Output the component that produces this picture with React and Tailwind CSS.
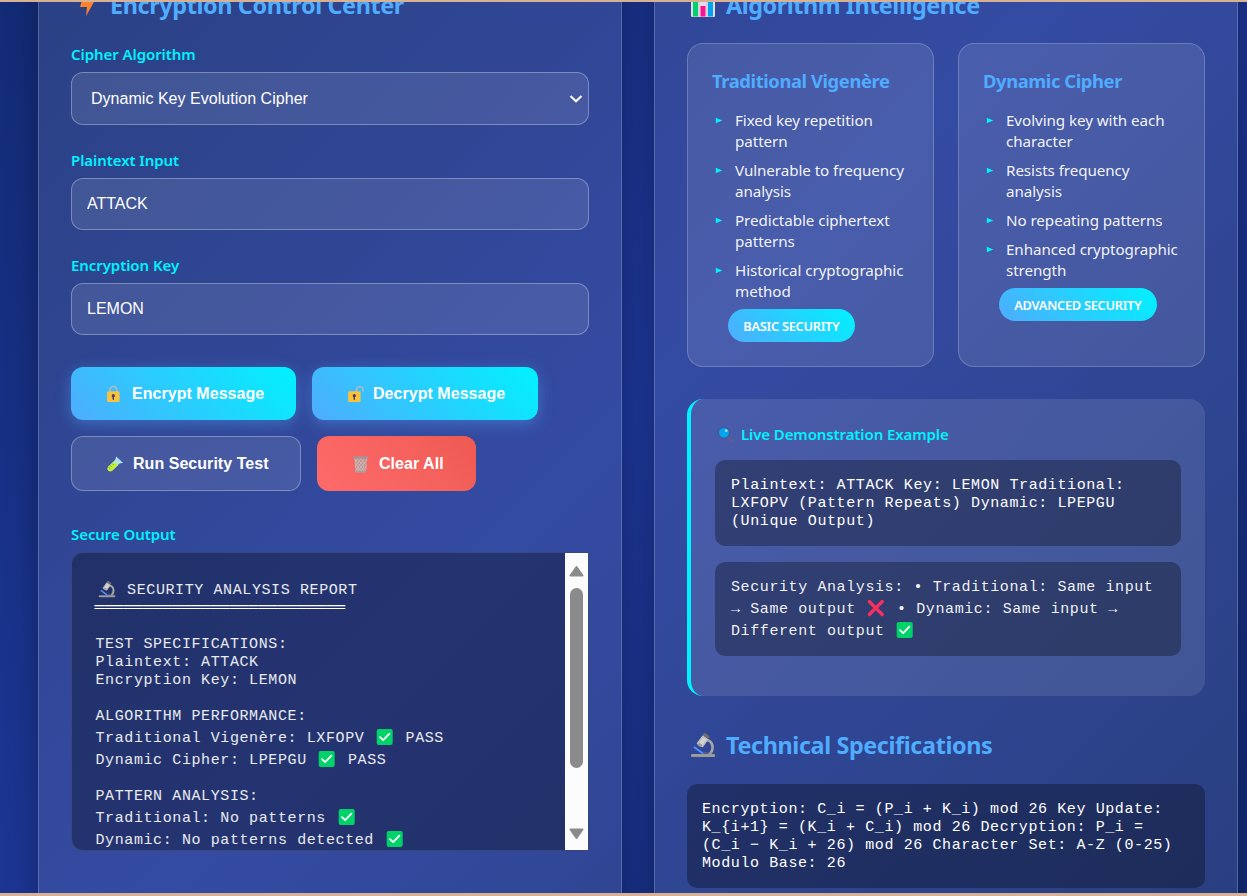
import React from "react";

const Bolt = () => (
  <svg viewBox="0 0 32 32" className="h-8 w-8">
    <path d="M13.5 3 H22 L19.5 13 H23 L15 27 L16 18 H9 Z" fill="#ff822d" />
  </svg>
);

const BarChart = () => (
  <svg viewBox="0 0 32 32" className="h-8 w-8">
    <rect x="4" y="4" width="24" height="24" rx="1.5" fill="#e6dcee" />
    <path d="M12 4v24M20 4v24" stroke="#cdc4d6" />
    <rect x="6" y="10" width="5" height="17.500" fill="#00d26a" />
    <rect x="13.5" y="17" width="5" height="10.500" fill="#f8158f" />
    <rect x="21" y="6" width="5" height="21.500" fill="#00a6ed" />
  </svg>
);

const Microscope = ({ className }) => (
  <svg viewBox="0 0 32 32" className={className}>
    <path d="M19 10.5 C26 12 28 20 22 26" fill="none" stroke="#a8a8a8" strokeWidth="2.6" />
    <path d="M13 27 H25 V23 H17 Z" fill="#7d7d7d" opacity=".35" />
    <rect x="4" y="25" width="24" height="3" rx="1.2" fill="#9b9b9b" />
    <path d="M7 18 L16 24.5" stroke="#5092ff" strokeWidth="2" />
    <path d="M16 7 L20.500 10.500 L15.500 17.500 L10.500 14.500 Z" fill="#d3d3d3" stroke="#bdbdbd" strokeLinejoin="round" strokeWidth="1.500" />
    <path d="M17.500 5.500 L21 8" stroke="#6f6f6f" strokeWidth="3" strokeLinecap="round" />
    <path d="M11.500 15 L14.500 17" stroke="#9b9b9b" strokeWidth="3" />
  </svg>
);

const Check = () => (
  <svg viewBox="0 0 22 22" className="mt-[2px] inline-block h-[22px] w-[22px] align-top">
    <rect x="2.700" y="1" width="16" height="16" rx="2" fill="#00d26a" />
    <path d="M6 9.200 L9.200 12.200 L15.400 5.600" fill="none" stroke="#fff" strokeWidth="1.800" strokeLinecap="round" strokeLinejoin="round" />
  </svg>
);

const Cross = () => (
  <svg viewBox="0 0 22 22" className="mt-[2px] inline-block h-[22px] w-[22px] align-top">
    <path d="M4.300 2.500 L17.300 15.500 M17.300 2.500 L4.300 15.500" stroke="#f92f60" strokeWidth="3.200" strokeLinecap="round" />
  </svg>
);

const Lock = ({ open }) => (
  <svg viewBox="0 0 21 22" className="h-[22px] w-[21px] overflow-visible">
    {open ? (
      <path d="M12.500 9 V6.500 A3.300 3.300 0 0 1 19 6.500 V8.500" fill="none" stroke="#a7bcc8" strokeWidth="1.600" />
    ) : (
      <path d="M7 9 V6.800 A3.400 3.400 0 0 1 13.800 6.800 V9" fill="none" stroke="#a7bcc8" strokeWidth="1.600" />
    )}
    <rect x="4.100" y="8.300" width="12.500" height="10.800" rx="1.400" fill="#f9c23c" />
    <circle cx="10.300" cy="12.700" r="1.600" fill="#433b6b" />
    <path d="M10.300 13 V16.200" stroke="#433b6b" strokeWidth="1.400" strokeLinecap="round" />
  </svg>
);

const TestTube = () => (
  <svg viewBox="0 0 21 22" className="h-[22px] w-[21px]">
    <path d="M12.500 5.500 L16.500 9.500 L8.500 17.300 C5.500 20 1.800 16.500 4.500 13.500 Z" fill="#b4e8c0" />
    <path d="M8.500 9.700 L14.200 11.900 L8.500 17.400 C5.500 20 1.800 16.500 4.500 13.500 Z" fill="#c3ef3c" />
    <path d="M12.200 3.600 L19 9.700 L15.600 10.500 L11.300 6.600 Z" fill="#aeddff" />
    <path d="M6.500 12.500l1 1M8.500 10.800l1 1M5 14.500l1 1" stroke="#44911b" />
  </svg>
);

const Trash = () => (
  <svg viewBox="0 0 21 22" className="h-[22px] w-[21px]">
    <path d="M4.200 5 H17.400 L16.200 18.500 H5.400 Z" fill="#b9a3a3" opacity=".7" />
    <path
      d="M4.500 6 L7.500 10 L5 13 L8 17.500 M7.500 6 L4.800 10 L8 14 L5.800 18 M7.500 6 L11 10 L8 14 L11 18 M11 6 L7.500 10 L11 14 L8 18 M11 6 L14.300 10 L11 14 L14 18 M14.500 6 L11 10 L14 14 L11 18 M17 6 L14.300 10 L16.500 13 L14 17.500"
      fill="none"
      stroke="#c4bcbc"
      strokeWidth=".9"
    />
    <rect x="2.900" y="3.600" width="15.600" height="2" rx=".8" fill="#9b9b9b" />
    <rect x="5" y="17.700" width="11.400" height="1.800" rx=".8" fill="#a5a0a0" />
  </svg>
);

const Magnifier = () => (
  <svg viewBox="0 0 22 22" className="h-[22px] w-[22px]">
    <path d="M12.500 13 L16.500 16.500" stroke="#635994" strokeWidth="2.800" strokeLinecap="round" />
    <circle cx="9" cy="8.800" r="5.400" fill="#00a6ed" stroke="#4a4a8a" strokeWidth=".8" />
    <circle cx="11.300" cy="6.700" r="1.100" fill="#fff" />
  </svg>
);

const Heading = ({ icon, children, className }) => (
  <h2 className={`flex h-8 items-center gap-[7px] whitespace-nowrap font-['Noto_Sans','Open_Sans',sans-serif] text-[23.4px] font-bold leading-8 text-[#4facfe] ${className}`}>
    {icon}
    {children}
  </h2>
);

const Label = ({ children, className }) => (
  <label className={`block h-5 font-['Noto_Sans','Open_Sans',sans-serif] text-[15px] font-semibold leading-[19px] tracking-[-0.07px] text-[#00f2fe] ${className}`}>
    {children}
  </label>
);

const field =
  "block h-[52px] w-full rounded-xl border border-white/30 bg-white/10 px-[15px] pb-px font-['Liberation_Sans',Arial,sans-serif] text-base text-white outline-none";

const Button = ({ icon, children, className }) => (
  <button
    className={`flex items-center gap-2 whitespace-nowrap rounded-xl font-['Liberation_Sans',Arial,sans-serif] text-base font-bold leading-none tracking-[0.04px] text-white ${className}`}
  >
    {icon}
    {children}
  </button>
);

const Card = ({ title, items, badge }) => (
  <article className="h-[324px] rounded-2xl border border-white/20 bg-white/10 pt-6 pl-6 font-['Noto_Sans','Open_Sans',sans-serif]">
    <h3 className="mb-4 h-[26px] whitespace-nowrap text-[18.4px] font-bold leading-[26px] tracking-[-0.41px] text-[#4facfe]">{title}</h3>
    <ul className="mb-[7px] flex flex-col gap-2">
      {items.map((lines) => (
        <li key={lines[0]} className="flex text-[15.2px] leading-[21px] tracking-[-0.07px] text-white/95">
          <svg viewBox="0 0 23 21" className="h-[21px] w-[23px] shrink-0">
            <path d="M3.800 7.800 L10.300 10.500 L3.800 13.200 Z" fill="#00f2fe" />
          </svg>
          <span className="whitespace-nowrap">
            {lines.map((l, i) => (
              <React.Fragment key={l}>
                {i > 0 && <br />}
                {l}
              </React.Fragment>
            ))}
          </span>
        </li>
      ))}
    </ul>
    <span className="ml-4 inline-block h-[33px] whitespace-nowrap rounded-full bg-[linear-gradient(45deg,#4facfe,#00f2fe)] px-[15.3px] text-[12.8px] font-semibold leading-[35px] tracking-[-0.28px] text-white">
      {badge}
    </span>
  </article>
);

const mono = "font-['Liberation_Mono','Courier_New',monospace] text-[15px] tracking-[0.6px] leading-[18px] whitespace-pre";
const emojiRow = "h-[22px] leading-[26px]";
const panel =
  "-mt-[60px] h-[1040px] w-[584px] shrink-0 rounded-[20px] border border-white/20 bg-white/10 px-8 pt-[46px] shadow-[0_8px_32px_rgba(0,0,0,0.3)]";

export default function App() {
  return (
    <div className="flex h-[896px] w-[1247px] flex-col overflow-hidden bg-[linear-gradient(135deg,#0c2461_-30%,#1e3799_49%,#0c2461_124%)]">
      <div className="h-[2px] shrink-0 bg-[#d8b094]" />
      <main className="flex min-h-0 flex-1 gap-8 overflow-hidden pl-[38px]">
        <section className={panel}>
          <Heading icon={<Bolt />} className="tracking-[-0.38px]">Encryption Control Center</Heading>

          <Label className="mt-6 mb-[7px]">Cipher Algorithm</Label>
          <div className="flex h-[53px] items-center justify-between rounded-xl border border-white/30 bg-white/10 pr-[5px] pl-[19px] font-['Liberation_Sans',Arial,sans-serif] text-base text-white">
            <span className="leading-none tracking-[0.03px]">Dynamic Key Evolution Cipher</span>
            <svg viewBox="0 0 14 10" className="h-[10px] w-[14px]">
              <path d="M1.500 2 L7 7.300 L12.500 2" fill="none" stroke="#fff" strokeWidth="2" />
            </svg>
          </div>

          <Label className="mt-[26px] mb-[7px]">Plaintext Input</Label>
          <input className={field} defaultValue="ATTACK" />

          <Label className="mt-[26px] mb-[7px]">Encryption Key</Label>
          <input className={field} defaultValue="LEMON" />

          <div className="mt-8 flex flex-wrap gap-4">
            <Button icon={<Lock />} className="h-[53px] w-[225px] bg-[linear-gradient(45deg,#4facfe,#00f2fe)] pl-8 shadow-[0_4px_15px_rgba(79,172,254,0.4)]">
              Encrypt Message
            </Button>
            <Button icon={<Lock open />} className="h-[53px] w-[226px] bg-[linear-gradient(45deg,#4facfe,#00f2fe)] pl-8 shadow-[0_4px_15px_rgba(79,172,254,0.4)]">
              Decrypt Message
            </Button>
            <Button icon={<TestTube />} className="h-[55px] w-[230px] border border-white/30 bg-white/10 pl-8">
              Run Security Test
            </Button>
            <Button icon={<Trash />} className="h-[55px] w-[159px] bg-[linear-gradient(45deg,#ff6b6b,#ee5a52)] pl-[33px]">
              Clear All
            </Button>
          </div>

          <Label className="mt-[34px] mb-[7px]">Secure Output</Label>
          <div className="flex h-[299px] overflow-hidden rounded-l-xl border border-white/10 bg-black/30">
            <div className={`min-w-0 flex-1 overflow-hidden pt-[25px] pl-[23.5px] text-white/90 ${mono}`}>
              <div className="flex h-[22px] items-center leading-[22px]">
                <Microscope className="h-[22px] w-[22px]" />
                <span className="mt-1">{" SECURITY ANALYSIS REPORT"}</span>
              </div>
              <div className="-mt-px -ml-px text-base leading-[18px] tracking-[0.04px] text-white">{"═".repeat(26)}</div>
              <div className="mt-[19px]">TEST SPECIFICATIONS:</div>
              <div>Plaintext: ATTACK</div>
              <div>Encryption Key: LEMON</div>
              <div className="mt-[18px]">ALGORITHM PERFORMANCE:</div>
              <div className={emojiRow}>Traditional Vigenère: LXFOPV <Check /> PASS</div>
              <div className={emojiRow}>Dynamic Cipher: LPEPGU <Check /> PASS</div>
              <div className="mt-[18px]">PATTERN ANALYSIS:</div>
              <div className={emojiRow}>Traditional: No patterns <Check /></div>
              <div className={emojiRow}>Dynamic: No patterns detected <Check /></div>
            </div>
            <div className="-my-px flex w-[23px] shrink-0 flex-col items-center bg-[#fcfcfc] pt-[13px] pb-[11px]">
              <svg viewBox="0 0 15 12" className="h-3 w-[15px]">
                <path d="M7.500 2 L13.500 10.500 H1.500 Z" fill="#8b8b8b" stroke="#8b8b8b" strokeWidth="2" strokeLinejoin="round" />
              </svg>
              <div className="mt-[11px] h-[180px] w-[13px] rounded-full bg-[#8b8b8b]" />
              <svg viewBox="0 0 15 12" className="mt-auto h-3 w-[15px]">
                <path d="M7.500 10 L13.500 1.500 H1.500 Z" fill="#8b8b8b" stroke="#8b8b8b" strokeWidth="2" strokeLinejoin="round" />
              </svg>
            </div>
          </div>
        </section>

        <section className={panel}>
          <Heading icon={<BarChart />} className="tracking-[-0.45px]">Algorithm Intelligence</Heading>

          <div className="mt-[22px] grid grid-cols-2 gap-6">
            <Card
              title="Traditional Vigenère"
              badge="BASIC SECURITY"
              items={[
                ["Fixed key repetition", "pattern"],
                ["Vulnerable to frequency", "analysis"],
                ["Predictable ciphertext", "patterns"],
                ["Historical cryptographic", "method"],
              ]}
            />
            <Card
              title="Dynamic Cipher"
              badge="ADVANCED SECURITY"
              items={[
                ["Evolving key with each", "character"],
                ["Resists frequency", "analysis"],
                ["No repeating patterns"],
                ["Enhanced cryptographic", "strength"],
              ]}
            />
          </div>

          <div className="mt-8 h-[297px] rounded-2xl border-l-4 border-[#00f2fe] bg-white/10 px-6 pt-[23px]">
            <h4 className="mb-[13px] flex h-[25px] items-center gap-1 whitespace-nowrap font-['Noto_Sans','Open_Sans',sans-serif] text-[15px] font-semibold tracking-[-0.1px] text-[#00f2fe]">
              <Magnifier />
              Live Demonstration Example
            </h4>
            <div className={`h-[86px] rounded-[10px] bg-black/30 px-4 pt-[17px] text-white ${mono}`}>
              {"Plaintext: ATTACK Key: LEMON Traditional:\nLXFOPV (Pattern Repeats) Dynamic: LPEPGU\n(Unique Output)"}
            </div>
            <div className={`mt-4 h-[94px] rounded-[10px] bg-black/30 px-4 pt-[17px] text-white/95 ${mono}`}>
              <div>Security Analysis: • Traditional: Same input</div>
              <div className={emojiRow}>→ Same output <Cross /> • Dynamic: Same input →</div>
              <div className={emojiRow}>Different output <Check /></div>
            </div>
          </div>

          <Heading icon={<Microscope className="h-8 w-8" />} className="mt-[33px] tracking-[-0.4px]">Technical Specifications</Heading>
          <div className={`mt-[23px] h-[104px] rounded-[10px] bg-black/30 pt-[17px] pl-[15px] text-white ${mono}`}>
            {"Encryption: C_i = (P_i + K_i) mod 26 Key Update:\nK_{i+1} = (K_i + C_i) mod 26 Decryption: P_i =\n(C_i − K_i + 26) mod 26 Character Set: A-Z (0-25)\nModulo Base: 26"}
          </div>
        </section>
      </main>
      <div className="h-[3px] shrink-0 bg-[#d8b094]" />
    </div>
  );
}
